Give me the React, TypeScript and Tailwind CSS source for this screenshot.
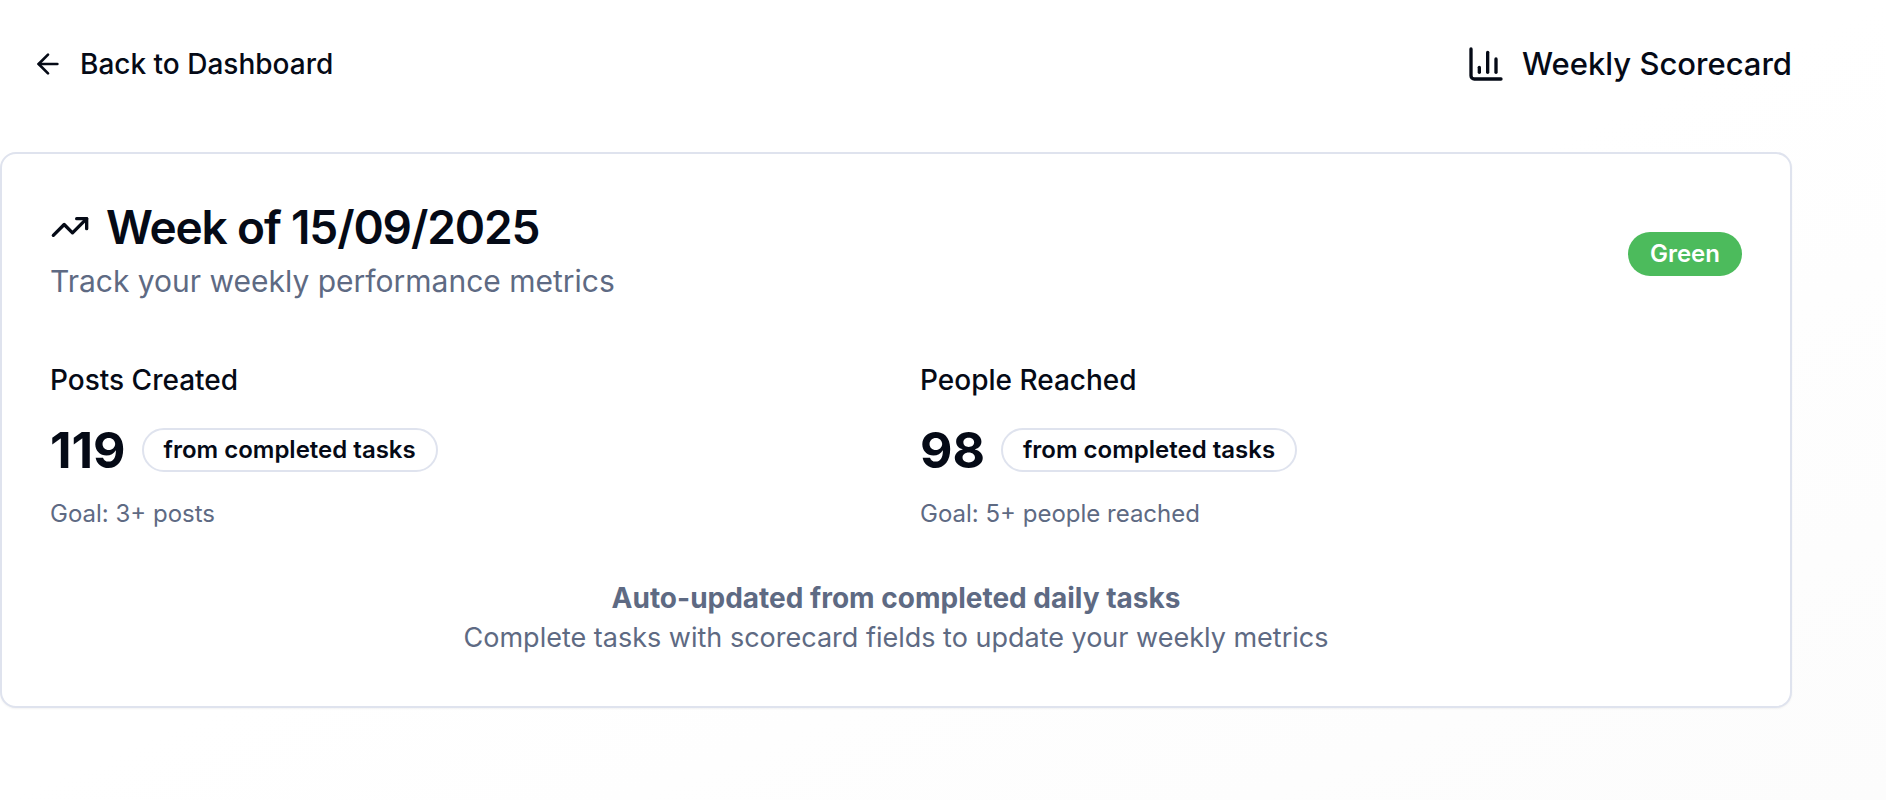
import React from 'react';
import { ArrowLeft, TrendingUp } from 'lucide-react';

interface Metric {
  label: string;
  value: number;
  goal: string;
}

const metrics: Metric[] = [
  { label: 'Posts Created', value: 119, goal: 'Goal: 3+ posts' },
  { label: 'People Reached', value: 98, goal: 'Goal: 5+ people reached' },
];

const ChartIcon: React.FC = () => (
  <svg
    className="h-10 w-10"
    viewBox="0 0 24 24"
    fill="none"
    stroke="currentColor"
    strokeWidth="2"
    strokeLinecap="round"
    strokeLinejoin="round"
    aria-hidden="true"
  >
    <path d="M3 3v16a2 2 0 0 0 2 2h16" />
    <path d="M18 17V9" />
    <path d="M13 17V5" />
    <path d="M8 17v-3" />
  </svg>
);

const App: React.FC = () => {
  return (
    <div className="min-h-screen bg-linear-to-br from-white from-50% to-[#fcfcfc] pr-[94px] font-['Inter',sans-serif] text-[#050a16]">
      {/* Page Header */}
      <header className="flex h-[152px] items-start justify-between pt-6">
        <button type="button" className="flex h-20 items-center gap-4 pl-8 text-[28px] font-medium">
          <ArrowLeft className="h-8 w-8" />
          Back to Dashboard
        </button>
        <div className="flex h-20 items-center gap-4">
          <ChartIcon />
          <h1 className="text-[31px] font-medium">Weekly Scorecard</h1>
        </div>
      </header>

      {/* Scorecard */}
      <main className="rounded-2xl border-2 border-[#dfe3ee] bg-white p-12 shadow-xs">
        <div className="flex items-center justify-between pb-12">
          <div className="space-y-1">
            <h2 className="flex items-center gap-4 text-[46px] leading-[50px] font-semibold tracking-tight">
              <TrendingUp className="h-10 w-10" />
              Week of 15/09/2025
            </h2>
            <p className="text-[30px] leading-[50px] text-[#5e6a83]">Track your weekly performance metrics</p>
          </div>
          <span className="rounded-full border-2 border-transparent bg-[#4cbb5c] px-5 py-1 text-[24px] leading-8 font-semibold text-white">
            Green
          </span>
        </div>

        <div className="grid grid-cols-2 gap-12">
          {metrics.map((metric) => (
            <div key={metric.label} className="space-y-4">
              <h3 className="pt-1 text-[28px] leading-11 font-medium">{metric.label}</h3>
              <div className="flex items-center gap-4">
                <span className="text-[50px] leading-16 font-bold">{metric.value}</span>
                <span className="rounded-full border-2 border-[#dfe3ee] px-5 py-1 text-[24px] leading-8 font-semibold">
                  from completed tasks
                </span>
              </div>
              <p className="text-[24px] leading-8 text-[#5e6a83]">{metric.goal}</p>
            </div>
          ))}
        </div>

        <div className="mt-12 text-center leading-10 text-[#5e6a83]">
          <p className="text-[28px] font-bold">Auto-updated from completed daily tasks</p>
          <p className="text-[27px]">Complete tasks with scorecard fields to update your weekly metrics</p>
        </div>
      </main>
    </div>
  );
};

export default App;
